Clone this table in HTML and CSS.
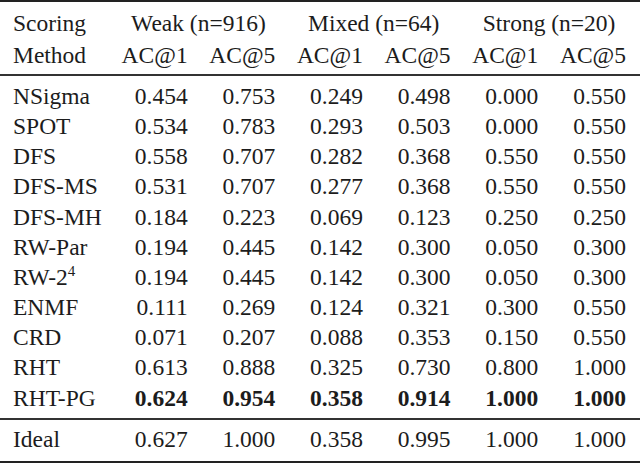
FILE: index.html
```html
<!DOCTYPE html>
<html>
<head>
<meta charset="utf-8">
<link rel="stylesheet" href="styles.css">
</head>
<body>
<table class="results">
  <thead>
    <tr class="head-top">
      <th class="method">Scoring</th>
      <th class="group" colspan="2">Weak (n=916)</th>
      <th class="group" colspan="2">Mixed (n=64)</th>
      <th class="group last" colspan="2">Strong (n=20)</th>
    </tr>
    <tr class="head-sub">
      <th class="method">Method</th>
      <th class="num">AC@1</th>
      <th class="num">AC@5</th>
      <th class="num">AC@1</th>
      <th class="num">AC@5</th>
      <th class="num">AC@1</th>
      <th class="num last">AC@5</th>
    </tr>
  </thead>
  <tbody>
    <tr class="first"><td class="method">NSigma</td><td class="num">0.454</td><td class="num">0.753</td><td class="num">0.249</td><td class="num">0.498</td><td class="num">0.000</td><td class="num last">0.550</td></tr>
    <tr><td class="method">SPOT</td><td class="num">0.534</td><td class="num">0.783</td><td class="num">0.293</td><td class="num">0.503</td><td class="num">0.000</td><td class="num last">0.550</td></tr>
    <tr><td class="method">DFS</td><td class="num">0.558</td><td class="num">0.707</td><td class="num">0.282</td><td class="num">0.368</td><td class="num">0.550</td><td class="num last">0.550</td></tr>
    <tr><td class="method">DFS-MS</td><td class="num">0.531</td><td class="num">0.707</td><td class="num">0.277</td><td class="num">0.368</td><td class="num">0.550</td><td class="num last">0.550</td></tr>
    <tr><td class="method">DFS-MH</td><td class="num">0.184</td><td class="num">0.223</td><td class="num">0.069</td><td class="num">0.123</td><td class="num">0.250</td><td class="num last">0.250</td></tr>
    <tr><td class="method">RW-Par</td><td class="num">0.194</td><td class="num">0.445</td><td class="num">0.142</td><td class="num">0.300</td><td class="num">0.050</td><td class="num last">0.300</td></tr>
    <tr><td class="method">RW-2<sup class="sup">4</sup></td><td class="num">0.194</td><td class="num">0.445</td><td class="num">0.142</td><td class="num">0.300</td><td class="num">0.050</td><td class="num last">0.300</td></tr>
    <tr><td class="method">ENMF</td><td class="num">0.111</td><td class="num">0.269</td><td class="num">0.124</td><td class="num">0.321</td><td class="num">0.300</td><td class="num last">0.550</td></tr>
    <tr><td class="method">CRD</td><td class="num">0.071</td><td class="num">0.207</td><td class="num">0.088</td><td class="num">0.353</td><td class="num">0.150</td><td class="num last">0.550</td></tr>
    <tr><td class="method">RHT</td><td class="num">0.613</td><td class="num">0.888</td><td class="num">0.325</td><td class="num">0.730</td><td class="num">0.800</td><td class="num last">1.000</td></tr>
    <tr class="best lastrow"><td class="method">RHT-PG</td><td class="num">0.624</td><td class="num">0.954</td><td class="num">0.358</td><td class="num">0.914</td><td class="num">1.000</td><td class="num last">1.000</td></tr>
  </tbody>
  <tbody class="ideal">
    <tr><td class="method">Ideal</td><td class="num">0.627</td><td class="num">1.000</td><td class="num">0.358</td><td class="num">0.995</td><td class="num">1.000</td><td class="num last">1.000</td></tr>
  </tbody>
</table>
</body>
</html>
```

FILE: styles.css
```css
html, body {
  margin: 0;
  padding: 0;
  background: #ffffff;
}

.results {
  width: 640px;
  border-collapse: collapse;
  border-spacing: 0;
  font-family: "Liberation Serif", "Times New Roman", serif;
  font-size: 23.5px;
  color: #1c1c1c;
  border-top: 2px solid #222222;
  border-bottom: 2px solid #222222;
}

.results th,
.results td {
  box-sizing: border-box;
  padding: 0;
  font-weight: normal;
  white-space: nowrap;
  line-height: 30.15px;
}

.results .method {
  text-align: left;
  padding-left: 13px;
}

.results .num {
  width: 87.6px;
  text-align: right;
  padding-left: 10.8px;
  padding-right: 10.8px;
}

.results .num.last {
  width: 91px;
  padding-right: 14px;
}

.results .group {
  text-align: center;
  padding-left: 10.8px;
  padding-right: 10.8px;
}

.results .group.last {
  padding-right: 14px;
}

.head-top th {
  line-height: 32px;
  padding-top: 5px;
}

.head-sub th {
  line-height: 32px;
  padding-bottom: 3px;
}

.head-sub {
  border-bottom: 2px solid #333333;
}

tr.first td {
  padding-top: 5px;
}

tr.lastrow td {
  padding-bottom: 5px;
}

tr.best td.num {
  font-weight: bold;
}

.ideal {
  border-top: 2px solid #333333;
}

.ideal td {
  line-height: 30px;
  padding-top: 4px;
  padding-bottom: 7px;
}

.sup {
  font-size: 15px;
  line-height: 0;
  vertical-align: 9px;
}
```
